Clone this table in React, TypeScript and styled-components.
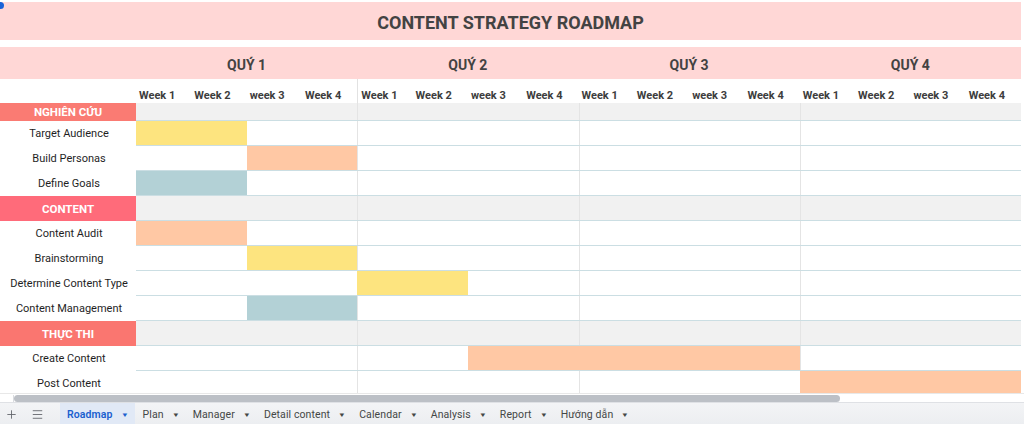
import styled, { createGlobalStyle } from 'styled-components';
import { Plus, Menu } from 'lucide-react';

const YELLOW = '#fde47f';
const PEACH = '#ffc8a4';
const TEAL = '#b3d1d6';

type Bar = { start: number; len: number; color: string };
type Item =
  | { kind: 'cat'; label: string; color: string; height: number }
  | { kind: 'task'; label: string; bar?: Bar };

const items: Item[] = [
  { kind: 'cat', label: 'NGHIÊN CỨU', color: '#fa7b73', height: 18 },
  { kind: 'task', label: 'Target Audience', bar: { start: 0, len: 2, color: YELLOW } },
  { kind: 'task', label: 'Build Personas', bar: { start: 2, len: 2, color: PEACH } },
  { kind: 'task', label: 'Define Goals', bar: { start: 0, len: 2, color: TEAL } },
  { kind: 'cat', label: 'CONTENT', color: '#ff6b7a', height: 25 },
  { kind: 'task', label: 'Content Audit', bar: { start: 0, len: 2, color: PEACH } },
  { kind: 'task', label: 'Brainstorming', bar: { start: 2, len: 2, color: YELLOW } },
  { kind: 'task', label: 'Determine Content Type', bar: { start: 4, len: 2, color: YELLOW } },
  { kind: 'task', label: 'Content Management', bar: { start: 2, len: 2, color: TEAL } },
  { kind: 'cat', label: 'THỰC THI', color: '#fa7670', height: 25 },
  { kind: 'task', label: 'Create Content', bar: { start: 6, len: 6, color: PEACH } },
  { kind: 'task', label: 'Post Content', bar: { start: 12, len: 4, color: PEACH } },
];

const quarters = ['QUÝ 1', 'QUÝ 2', 'QUÝ 3', 'QUÝ 4'];
const weeks = ['Week 1', 'Week 2', 'week 3', 'Week 4'];
const tabs = ['Roadmap', 'Plan', 'Manager', 'Detail content', 'Calendar', 'Analysis', 'Report', 'Hướng dẫn'];

const GlobalStyle = createGlobalStyle`
  body {
    margin: 0;
    background: #ffffff;
    font-family: Roboto, "Liberation Sans", Arial, sans-serif;
  }
`;

const Page = styled.div`
  width: 1024px;
  height: 424px;
  display: flex;
  flex-direction: column;
  overflow: hidden;
  position: relative;
`;

const Handle = styled.div`
  position: absolute;
  left: -3px;
  top: 2px;
  width: 7px;
  height: 7px;
  border-radius: 50%;
  background: #1a63d8;
`;

const Sheet = styled.div`
  height: 393px;
  overflow: hidden;
  width: 1021px;
  padding-top: 2px;
  box-sizing: border-box;
`;

const TitleBar = styled.div`
  height: 38px;
  background: #ffd7d6;
  display: flex;
  align-items: center;
  justify-content: center;
  padding-top: 2px;
  box-sizing: border-box;
  font-size: 18px;
  font-weight: 700;
  color: #434343;
`;

const QuarterRow = styled.div`
  margin-top: 7px;
  height: 32px;
  background: #ffd7d6;
  display: grid;
  grid-template-columns: 136px repeat(4, 1fr);
`;

const QuarterLabel = styled.div`
  display: flex;
  align-items: center;
  justify-content: center;
  padding-top: 3px;
  font-size: 14px;
  font-weight: 700;
  color: #434343;
`;

const WeekRow = styled.div`
  height: 24px;
  display: grid;
  grid-template-columns: 136px repeat(16, 1fr);
`;

const WeekCell = styled.div<{ $divider?: boolean }>`
  display: flex;
  align-items: flex-end;
  padding: 0 0 1px 3px;
  font-size: 11px;
  font-weight: 700;
  color: #3d3d3d;
  white-space: nowrap;
  border-left: ${(p) => (p.$divider ? '1px solid #e2e2e2' : 'none')};
`;

const Row = styled.div<{ $h: number }>`
  height: ${(p) => p.$h}px;
  display: grid;
  grid-template-columns: 136px 1fr;
`;

const TaskLabel = styled.div`
  display: flex;
  align-items: center;
  justify-content: center;
  padding-left: 2px;
  font-size: 11px;
  color: #1f1f1f;
  white-space: nowrap;
`;

const CatLabel = styled.div<{ $bg: string }>`
  display: flex;
  align-items: center;
  justify-content: center;
  background: ${(p) => p.$bg};
  color: #ffffff;
  font-size: 11.5px;
  font-weight: 700;
`;

const DataArea = styled.div<{ $cat?: boolean }>`
  display: grid;
  grid-template-columns: repeat(16, 1fr);
  grid-template-rows: 100%;
  background: ${(p) => (p.$cat ? '#f1f1f1' : '#ffffff')};
  border-bottom: 1px solid #cbdee3;
  box-sizing: border-box;
`;

const QuarterCell = styled.div<{ $q: number }>`
  grid-row: 1;
  grid-column: ${(p) => p.$q * 4 + 1} / span 4;
  border-left: ${(p) => (p.$q > 0 ? '1px solid #e4e4e4' : 'none')};
`;

const BarCell = styled.div<{ $start: number; $len: number; $color: string }>`
  grid-row: 1;
  grid-column: ${(p) => p.$start + 1} / span ${(p) => p.$len};
  background: ${(p) => p.$color};
`;

const ScrollStrip = styled.div`
  height: 9px;
  display: flex;
  align-items: center;
  border-top: 1px solid #e8e8e8;
  box-sizing: border-box;
`;

const ScrollCorner = styled.div`
  width: 13px;
  height: 7px;
  border-right: 1px solid #dadce0;
`;

const ScrollThumb = styled.div`
  width: 826px;
  height: 7px;
  border-radius: 4px;
  background: #bcc0c6;
`;

const TabBar = styled.div`
  flex: 1;
  display: flex;
  align-items: stretch;
  background: linear-gradient(#f3f4f6, #eceef1);
  border-top: 1px solid #dfe1e5;
  font-family: Roboto, "Liberation Sans", Arial, sans-serif;
`;

const IconBtn = styled.div<{ $w: number }>`
  width: ${(p) => p.$w}px;
  display: flex;
  align-items: center;
  justify-content: center;
  padding-top: 2px;
  color: #5f6368;
`;

const Tab = styled.div<{ $active?: boolean }>`
  display: flex;
  align-items: center;
  gap: 9px;
  padding: 2px 7px 0 7px;
  margin-right: ${(p) => (p.$active ? '1px' : '0')};
  font-size: 10.5px;
  letter-spacing: 0.1px;
  font-weight: ${(p) => (p.$active ? 600 : 400)};
  color: ${(p) => (p.$active ? '#1a5fcf' : '#444746')};
  background: ${(p) => (p.$active ? '#e1e9f6' : 'transparent')};
  white-space: nowrap;
`;

const Caret = styled.span`
  font-size: 6px;
  transform: scaleX(1.3);
`;

export default function App() {
  return (
    <Page>
      <GlobalStyle />
      <Handle />
      <Sheet>
        <TitleBar>CONTENT STRATEGY ROADMAP</TitleBar>
        <QuarterRow>
          <div />
          {quarters.map((q) => (
            <QuarterLabel key={q}>{q}</QuarterLabel>
          ))}
        </QuarterRow>
        <WeekRow>
          <div />
          {quarters.map((q, qi) =>
            weeks.map((w, wi) => (
              <WeekCell key={q + w} $divider={qi === 1 && wi === 0}>
                {w}
              </WeekCell>
            ))
          )}
        </WeekRow>
        {items.map((it) =>
          it.kind === 'cat' ? (
            <Row key={it.label} $h={it.height}>
              <CatLabel $bg={it.color}>{it.label}</CatLabel>
              <DataArea $cat>
                {[0, 1, 2, 3].map((q) => (
                  <QuarterCell key={q} $q={q} />
                ))}
              </DataArea>
            </Row>
          ) : (
            <Row key={it.label} $h={25}>
              <TaskLabel>{it.label}</TaskLabel>
              <DataArea>
                {[0, 1, 2, 3].map((q) => (
                  <QuarterCell key={q} $q={q} />
                ))}
                {it.bar && <BarCell $start={it.bar.start} $len={it.bar.len} $color={it.bar.color} />}
              </DataArea>
            </Row>
          )
        )}
      </Sheet>
      <ScrollStrip>
        <ScrollCorner />
        <ScrollThumb />
      </ScrollStrip>
      <TabBar>
        <IconBtn $w={22}>
          <Plus size={13} strokeWidth={1.6} />
        </IconBtn>
        <IconBtn $w={30}>
          <Menu size={13} strokeWidth={1.6} />
        </IconBtn>
        <div style={{ width: 8 }} />
        {tabs.map((t, i) => (
          <Tab key={t} $active={i === 0}>
            {t}
            <Caret>▼</Caret>
          </Tab>
        ))}
      </TabBar>
    </Page>
  );
}
